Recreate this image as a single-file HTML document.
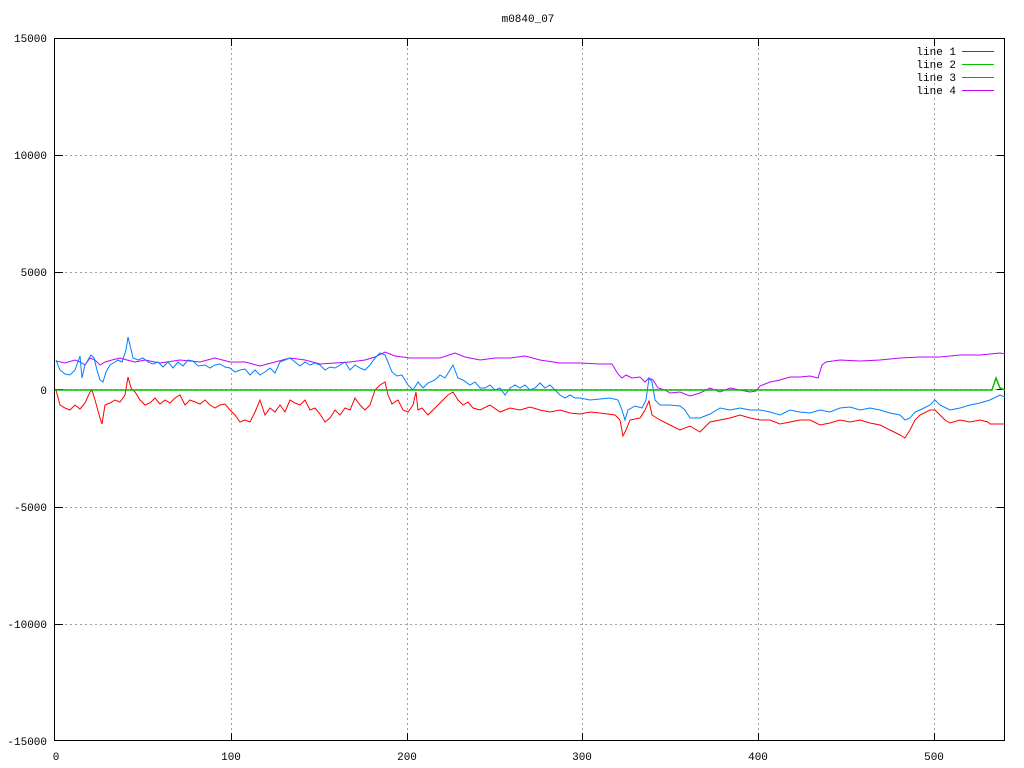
<!DOCTYPE html>
<html><head><meta charset="utf-8"><style>
html,body{margin:0;padding:0;background:#fff;}
svg{display:block;}
text{font-family:"Liberation Mono","DejaVu Sans Mono",monospace;font-size:11px;fill:#000;}
</style></head><body>
<svg width="1024" height="768" viewBox="0 0 1024 768" xmlns="http://www.w3.org/2000/svg">
<rect width="1024" height="768" fill="#fff"/>
<g stroke="#a0a0a0" stroke-width="1" stroke-dasharray="2,3" shape-rendering="crispEdges">
<line x1="55" y1="155.5" x2="1005" y2="155.5"/>
<line x1="55" y1="272.5" x2="1005" y2="272.5"/>
<line x1="55" y1="389.5" x2="1005" y2="389.5"/>
<line x1="55" y1="507.5" x2="1005" y2="507.5"/>
<line x1="55" y1="624.5" x2="1005" y2="624.5"/>
<line x1="231.5" y1="38" x2="231.5" y2="741"/>
<line x1="407.5" y1="38" x2="407.5" y2="741"/>
<line x1="582.5" y1="38" x2="582.5" y2="741"/>
<line x1="758.5" y1="38" x2="758.5" y2="741"/>
<line x1="934.5" y1="38" x2="934.5" y2="741"/>
<line x1="934.5" y1="38" x2="934.5" y2="741"/>
</g>
<g stroke="#000" stroke-width="1" shape-rendering="crispEdges">
<rect x="54.5" y="38.5" width="950" height="702" fill="none"/>
<line x1="55" y1="155.5" x2="63" y2="155.5"/><line x1="997" y1="155.5" x2="1005" y2="155.5"/>
<line x1="55" y1="272.5" x2="63" y2="272.5"/><line x1="997" y1="272.5" x2="1005" y2="272.5"/>
<line x1="55" y1="389.5" x2="63" y2="389.5"/><line x1="997" y1="389.5" x2="1005" y2="389.5"/>
<line x1="55" y1="507.5" x2="63" y2="507.5"/><line x1="997" y1="507.5" x2="1005" y2="507.5"/>
<line x1="55" y1="624.5" x2="63" y2="624.5"/><line x1="997" y1="624.5" x2="1005" y2="624.5"/>
<line x1="231.5" y1="741" x2="231.5" y2="733"/><line x1="231.5" y1="38" x2="231.5" y2="46"/>
<line x1="407.5" y1="741" x2="407.5" y2="733"/><line x1="407.5" y1="38" x2="407.5" y2="46"/>
<line x1="582.5" y1="741" x2="582.5" y2="733"/><line x1="582.5" y1="38" x2="582.5" y2="46"/>
<line x1="758.5" y1="741" x2="758.5" y2="733"/><line x1="758.5" y1="38" x2="758.5" y2="46"/>
<line x1="934.5" y1="741" x2="934.5" y2="733"/><line x1="934.5" y1="38" x2="934.5" y2="46"/>
</g>
<g text-anchor="end">
<text x="47" y="42">15000</text>
<text x="47" y="159">10000</text>
<text x="47" y="276">5000</text>
<text x="47" y="394">0</text>
<text x="47" y="511">-5000</text>
<text x="47" y="628">-10000</text>
<text x="47" y="745">-15000</text>
</g>
<g text-anchor="middle">
<text x="56" y="760">0</text>
<text x="231" y="760">100</text>
<text x="407" y="760">200</text>
<text x="582" y="760">300</text>
<text x="758" y="760">400</text>
<text x="934" y="760">500</text>
<text x="528" y="22">m0840_07</text>
</g>
<g text-anchor="end">
<text x="956" y="55">line 1</text>
<text x="956" y="68">line 2</text>
<text x="956" y="81">line 3</text>
<text x="956" y="94">line 4</text>
</g>
<g stroke-width="1" fill="none">
<line x1="962" y1="51.5" x2="994" y2="51.5" stroke="#ff0000"/>
<line x1="962" y1="64.5" x2="994" y2="64.5" stroke="#00c000"/>
<line x1="962" y1="77.5" x2="994" y2="77.5" stroke="#0080ff"/>
<line x1="962" y1="90.5" x2="994" y2="90.5" stroke="#c000ff"/>
<polyline stroke="#c000ff" points="56,361 65,363 75,360 80,362 85,365 90,358 95,360 100,365 105,362 112,360 120,358 127,360 135,362 145,360 160,363 180,360 200,362 215,358 230,362 245,362 260,366 275,362 290,358 305,360 320,364 335,363 350,362 365,360 375,357 385,352 395,356 410,358 425,358 440,358 455,353 465,357 480,360 495,358 510,358 525,356 540,360 560,363 580,363 600,364 612,364 618,374 622,378 626,375 632,378 640,377 645,382 649,378 653,380 658,388 665,390 670,393 680,392 690,396 700,393 710,388 720,392 730,388 740,390 750,392 756,391 760,386 770,382 780,380 790,377 800,377 810,376 818,378 822,365 826,362 840,360 860,361 880,360 900,358 920,357 940,357 960,355 980,355 1000,353 1005,354"/>
<polyline stroke="#0080ff" points="56,360 60,370 65,374 70,375 75,370 80,356 82,378 85,365 88,360 91,355 94,358 97,370 100,380 103,382 106,372 110,365 115,362 118,360 122,362 126,350 128,337 130,345 133,358 138,360 143,358 148,362 153,364 158,362 163,367 168,362 173,368 178,362 183,366 188,360 193,361 198,366 205,365 210,368 215,365 220,364 225,367 230,368 235,372 240,370 245,369 250,375 255,370 260,375 265,372 270,368 275,373 280,362 285,360 290,358 295,362 300,366 305,362 310,365 315,363 320,365 325,370 330,367 335,368 340,365 345,362 350,370 355,365 360,368 365,370 370,365 375,358 380,353 385,355 388,362 392,372 397,376 402,375 408,385 413,390 418,382 423,388 428,383 435,380 440,375 445,378 450,370 453,365 458,378 463,380 470,385 475,382 480,388 485,388 490,385 495,390 500,388 505,395 510,388 515,385 520,388 525,385 530,390 535,388 540,383 545,388 550,385 555,390 560,395 565,398 570,395 575,398 580,398 590,400 600,399 610,398 618,400 622,410 625,420 628,410 635,406 642,408 646,400 649,378 652,382 655,400 660,405 670,405 680,406 685,410 690,418 700,418 710,414 720,408 730,410 740,408 750,410 760,410 770,412 780,415 790,410 800,412 810,413 820,410 830,412 840,408 850,407 860,410 870,408 880,410 890,413 900,415 905,420 910,418 915,412 920,410 930,405 935,400 940,405 950,410 960,408 970,405 980,403 990,400 1000,395 1005,397"/>
<polyline stroke="#ff0000" points="56,390 60,405 65,408 70,410 75,405 80,409 85,403 90,392 92,390 95,400 100,418 102,424 105,405 110,403 115,400 120,402 125,395 128,377 131,388 135,392 140,400 145,405 150,403 155,398 160,404 165,400 170,403 175,398 180,395 185,405 190,400 195,402 200,404 205,400 210,405 215,408 220,405 225,404 230,410 235,415 240,422 245,420 250,422 255,412 260,400 265,415 270,408 275,412 280,405 285,412 290,400 295,403 300,405 305,400 310,410 315,408 320,414 325,422 330,418 335,410 340,415 345,408 350,410 355,398 360,405 365,410 370,405 375,390 380,385 385,382 388,395 392,404 398,400 403,410 408,412 413,405 416,392 418,410 422,408 428,415 433,410 438,405 443,400 448,395 453,392 458,400 463,405 468,402 473,408 480,410 490,405 500,412 510,408 520,410 530,407 540,410 550,412 560,410 570,413 580,414 590,412 600,413 615,415 620,420 623,436 626,430 630,420 640,418 645,410 649,401 652,415 660,420 670,425 680,430 690,426 700,432 710,422 720,420 730,418 740,415 750,418 760,420 770,420 780,424 790,422 800,420 810,420 820,425 830,423 840,420 850,422 860,420 870,423 880,425 890,430 900,435 905,438 910,430 915,420 920,415 930,410 935,410 940,415 945,420 950,423 960,420 970,422 980,420 988,422 990,424 1005,424"/>
<polyline stroke="#00c000" stroke-width="1.5" points="55,390 992,390 996,378 1000,388 1005,390"/>
</g>
</svg>
</body></html>
